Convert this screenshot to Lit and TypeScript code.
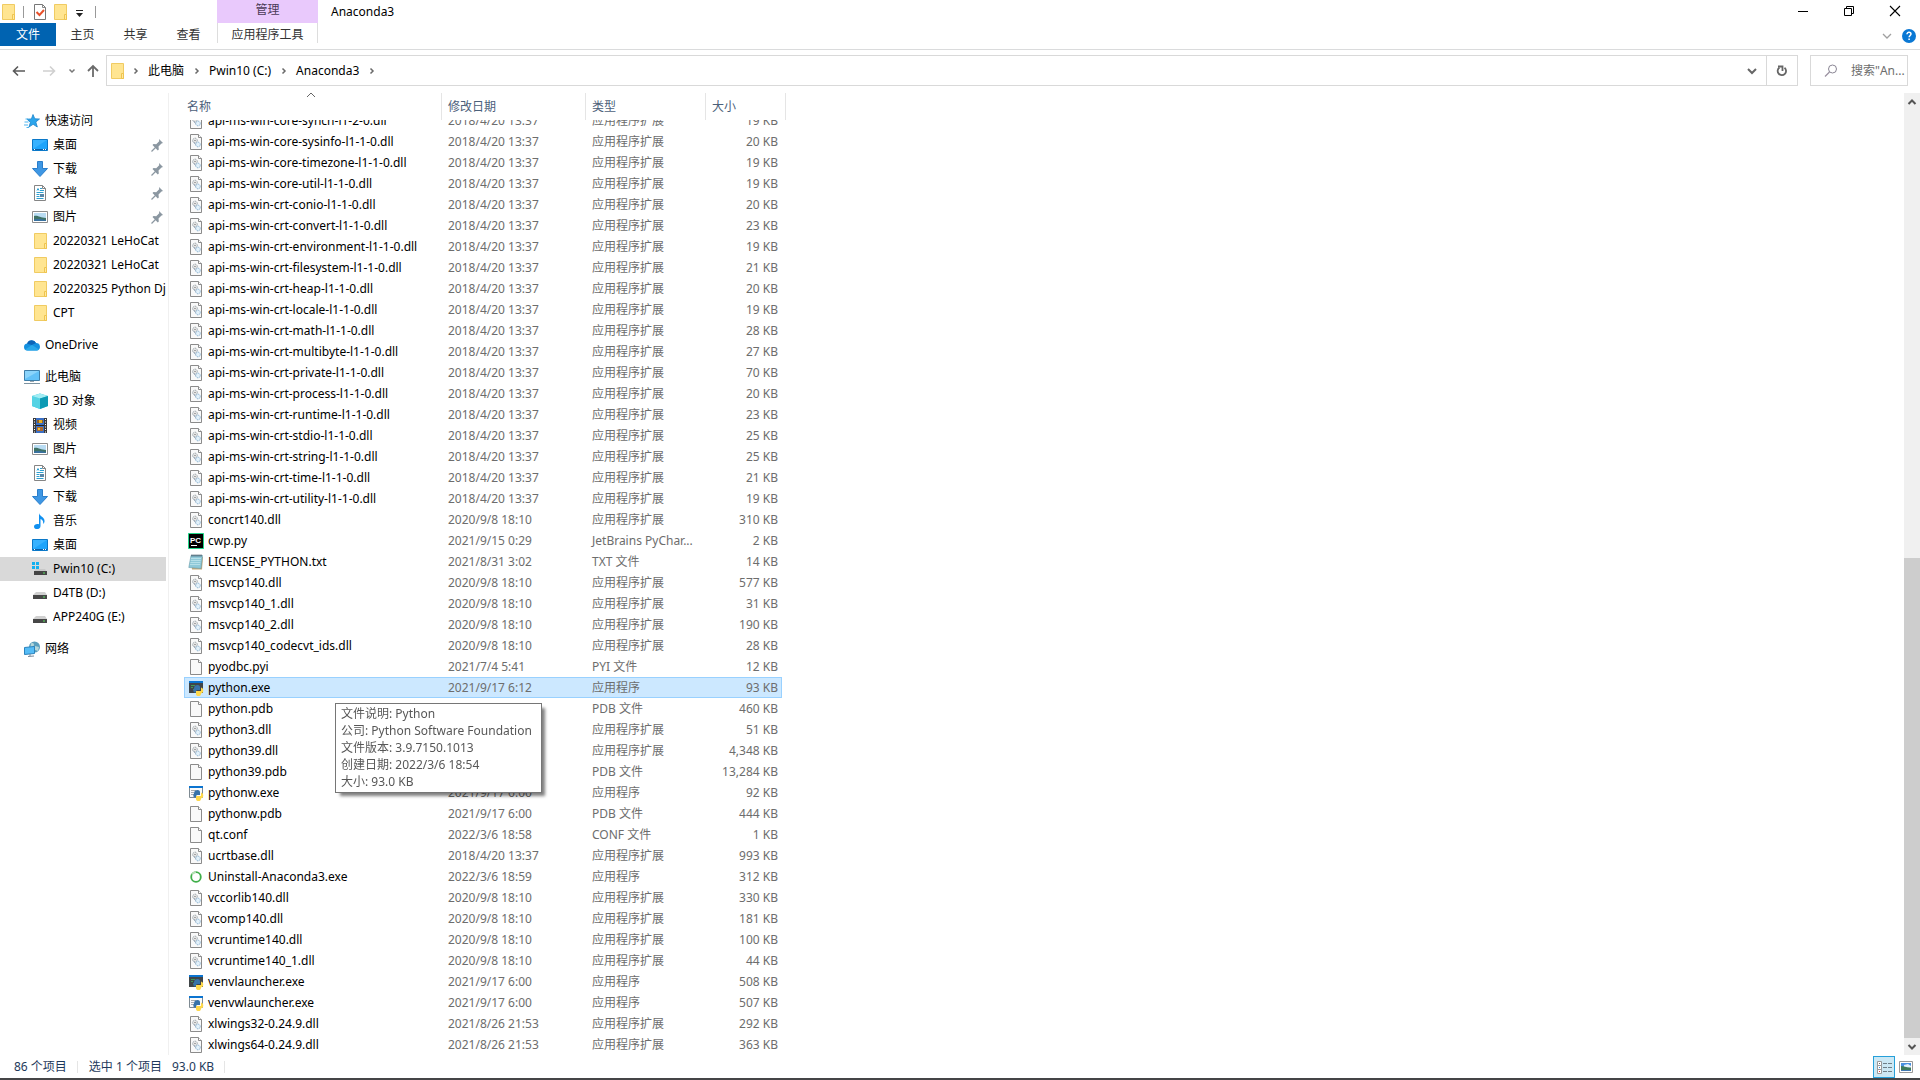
import { LitElement, html, css, svg, nothing } from "lit";
import { customElement } from "lit/decorators.js";
import { classMap } from "lit/directives/class-map.js";

const shape = {
  folder: svg`<path d="M2.5.5h12v15h-12z" fill="#ffe38b" stroke="#f0cb62"/><path d="M3 1h11v14H3z" fill="#ffe591"/><path d="M12.5 10.5h2v5h-2z" fill="#ffe9a0" stroke="#efc44f"/>`,
  check: svg`<path d="M2.500.5h8l3 3v12h-11z" fill="#fff" stroke="#777"/><path d="M10.500.5v3h3" fill="none" stroke="#888"/><path d="M4.500 8l3 3L12 6" fill="none" stroke="#e8502a" stroke-width="2"/>`,
  star: svg`<path d="M9 1.500l1.800 4.300 4.700.2-3.700 3 1.500 5-4.200-2.700L5 14l1.400-4.700L3 6.200l4.400-.3z" fill="#2ba5ec" stroke="#1c84cc" stroke-width=".8"/><path d="M1.500 6H4M.5 9h4M0 12h4M2.500 14.500H5" stroke="#4db4ef"/>`,
  desktop: svg`<path d="M.5 2.500h15v11H.5z" fill="#1ea4fb" stroke="#0b78c8"/><path d="M1 3h14L1 12z" fill="#38b2ff"/><path d="M1 12.500h14" stroke="#0a5fa8"/><path d="M2 12.500h1M11 12.500h1M13 12.500h1" stroke="#fff"/>`,
  download: svg`<path d="M5.500.5h5v7h5L8 15.500.500 7.500h5z" fill="#3e97e4" stroke="#2a7ecb"/>`,
  doc: svg`<path d="M2.500.5h8l3 3v12h-11z" fill="#fff" stroke="#858585"/><path d="M10.500.5v3h3" fill="none" stroke="#858585"/><path d="M5 5.500l1-2 1 2M8 3.500h2M8 5.500h4M4.500 7.500h7M4.500 9.500h3M4.500 11.500h3M4.500 13.500h7" fill="none" stroke="#2e9fd0"/><path d="M8 9h4v3H8z" fill="#5b88a8"/>`,
  picture: svg`<path d="M.5 2.500h15v11H.5z" fill="#fff" stroke="#8d8d8d"/><path d="M2 4h12v8H2z" fill="#b9dcf3"/><path d="M2 7c4-1 6 2 12 2v3H2z" fill="#3f7266"/><path d="M2 10.500c5-1 8 0 12 .5v1H2z" fill="#39719f"/>`,
  thumbs: svg`<path d="M1.500 2.500h13v11h-13z" fill="#fff" stroke="#999"/><path d="M3 4h10v7H3z" fill="#4a90e0"/><path d="M6 6l4-1 3 2v2H6z" fill="#e6f1fb"/><path d="M3 7c3 0 6 2 10 1.500V12H3z" fill="#3f7a5a"/><path d="M3 11h10v1H3z" fill="#4379b0"/>`,
  cloud: svg`<path d="M3.500 13.500a3.500 3.500 0 0 1 0-7 4.700 4.700 0 0 1 8.500-.5 3.800 3.800 0 0 1 1 7.500z" fill="#1490df"/><path d="M3 6.800a4.800 4.800 0 0 1 9-.8l-4.300 2z" fill="#0b64b8"/><path d="M1 12.500l7-4.500 7 4.500a4 4 0 0 1-2 1H3.500a4 4 0 0 1-2.500-1z" fill="#28a8ea"/>`,
  pc: svg`<path d="M.5 1.500h15v10H.5z" fill="#62c1f7" stroke="#3f7ea8"/><path d="M1 2h14L1 10z" fill="#8bd4fb"/><path d="M6 12.500h4" stroke="#9aa6ae"/><path d="M0 14.500h16" stroke="#7d93a1"/>`,
  cube: svg`<path d="M8 .5l8 2.500v10l-8 3-8-3V3z" fill="#30c3d8"/><path d="M0 3l8 2.500V16l-8-3z" fill="#55d3e4"/><path d="M8 .5L16 3 8 5.500 0 3z" fill="#a2edf4"/><path d="M8 5.500L16 3v10l-8 3z" fill="#0c9ab4"/>`,
  video: svg`<path d="M1 1h14v15H1z" fill="#3a3a3a"/><path d="M4 1h8v15H4z" fill="#3b6fc4"/><path d="M5 3h6v3H5z" fill="#8d6028"/><path d="M7 3h3v3H7z" fill="#e8b020"/><path d="M5 10h6v4H5z" fill="#ad6a2e"/><path d="M6 11h2v2H6z" fill="#f0c030"/><path d="M4 8.500h8" stroke="#222"/><path d="M2.500 2v14M13.500 2v14" stroke="#fff" stroke-dasharray="1 1.500"/>`,
  music: svg`<path d="M7 0c.5 3.500 6 4 5.500 8.500-.2 1.500-1 2-1.500 2.500.8-3-.8-4.500-2.500-5v7c0 4-6.500 4-6.500.8 0-2.300 2.500-3.300 5-2.500z" fill="#1090f0"/>`,
  windisk: svg`<path d="M0 1h3v3H0zM4 1h3v3H4zM0 5h3v3H0zM4 5h3v3H4z" fill="#12b0f0"/><path d="M4 8h9l2 3H2z" fill="#c9c9c9"/><path d="M2 10h13v4H2z" fill="#454545"/><path d="M11 12h2" stroke="#58e060"/>`,
  disk: svg`<path d="M4 7h9l2 3H1z" fill="#d0d0d0"/><path d="M1 10h14v4H1z" fill="#474747"/><path d="M11 12h2" stroke="#58e060"/>`,
  network: svg`<circle cx="10.500" cy="6" r="5.500" fill="#5b9fbd"/><path d="M7 2.500c2-1 3 0 3 1.500S8 6 6.500 6zM11 5l4 1-1 4-3-1z" fill="#b5d7da"/><path d="M.5 6.500l10-1v7l-10 1z" fill="#55bcf6" stroke="#2b83bd"/><path d="M4 15.500l6-.5M6 13v2" stroke="#789"/>`,
  dll: svg`<path d="M2.500.5h8l3 3v12h-11z" fill="#f9f9f9" stroke="#8b8b8b"/><path d="M10.500.5v3h3" fill="#fff" stroke="#8b8b8b"/><circle cx="7" cy="6.500" r="2.300" fill="#eee" stroke="#8a959c" stroke-dasharray="1 .6"/><circle cx="7" cy="6.500" r=".8" fill="#888"/><circle cx="10" cy="10.500" r="2.300" fill="#e3f1fa" stroke="#82add0" stroke-dasharray="1 .6"/><path d="M5.500 8.500l2.500 2" stroke="#9ab"/>`,
  file: svg`<path d="M2.500.5h8l3 3v12h-11z" fill="#f9f9f9" stroke="#8b8b8b"/><path d="M10.500.5v3h3" fill="#fff" stroke="#8b8b8b"/>`,
  txt: svg`<path d="M3 3h12l-1 12.500H4z" fill="#c5a977"/><path d="M3 1.500h11.500L13 14.500.8 13.500z" fill="#8fc9d8" stroke="#699cab" stroke-width=".6"/><path d="M3 4.500h10M2.700 6.500h10M2.400 8.500h10M2 10.500h10" stroke="#c5e8ef" stroke-width=".7"/><path d="M3.500 1.500H14" stroke="#345" stroke-width="2" stroke-dasharray="1 1"/>`,
  pycharm: svg`<path d="M.5.500h15v15H.5z" fill="#000" stroke="#21d789"/><text x="2" y="9.500" font-family="Liberation Sans, sans-serif" font-size="8" font-weight="700" fill="#fff">PC</text><path d="M3 12.500h6" stroke="#fff"/>`,
  py: svg`<path d="M1 1h14v12H1z" fill="#404548"/><path d="M1 1h14v2H1z" fill="#0b74d0"/><path d="M3 5.500h4M3 7.500h2M5 9.500h2" stroke="#3f9a55"/><path d="M6 8.500C6 6 7.500 5 9.500 5S12 6 12 7.500V10H8.500v2.500H7C5 12.500 5 9.500 6 8.500z" fill="#3873a8"/><path d="M13 7.500c3 .5 3 5.500 0 6 0 2-1 2.500-2.500 2.500S8 15.500 8 14v-3h5z" fill="#ffd94c"/>`,
  pyw: svg`<path d="M1.500 1.500h13v11h-13z" fill="#fafafa" stroke="#7e8a92"/><path d="M1 1h14v2H1z" fill="#0b74d0"/><path d="M3 5.500h5M3 7.500h3M3 9.500h3" stroke="#a8aeb2"/><path d="M6 8.500C6 6 7.500 5 9.500 5S12 6 12 7.500V10H8.500v2.500H7C5 12.500 5 9.500 6 8.500z" fill="#3873a8"/><path d="M13 7.500c3 .5 3 5.500 0 6 0 2-1 2.500-2.500 2.500S8 15.500 8 14v-3h5z" fill="#ffd94c"/>`,
  ring: svg`<circle cx="8" cy="8" r="4.800" fill="none" stroke="#3fae49" stroke-width="1.800"/><path d="M4 5.500A4.800 4.800 0 0 1 8 3.200" fill="none" stroke="#b5e0b5" stroke-width="1.800"/>`,
  pin: svg`<path d="M11 2l4 4-1.500.5-3 3 .3 3-1 1L4.500 8l1-1 2.700.2 3-3z" fill="#8b97a1"/><path d="M8 10l-4.500 4.500" stroke="#8b97a1" stroke-width="1.300"/>`,
  back: svg`<path d="M2.500 8h11.500M7 3.500L2.500 8 7 12.500" fill="none" stroke="#5a5a5a" stroke-width="1.600"/>`,
  forward: svg`<path d="M2 8h11.500M9 3.500l4.500 4.500L9 12.500" fill="none" stroke="#d0d0d0" stroke-width="1.600"/>`,
  up: svg`<path d="M8 14V3M3 8l5-5 5 5" fill="none" stroke="#6b6b6b" stroke-width="1.800"/>`,
  small: svg`<path d="M5.500 6.500L8 9l2.500-2.500" fill="none" stroke="#777" stroke-width="1.500"/>`,
  sep: svg`<path d="M6.500 5.500L9 8l-2.500 2.500" fill="none" stroke="#6a6a6a" stroke-width="1.500"/>`,
  drop: svg`<path d="M4 6l4 4 4-4" fill="none" stroke="#666" stroke-width="2"/>`,
  thin: svg`<path d="M4 6l4 4 4-4" fill="none" stroke="#a0a0a0" stroke-width="1.300"/>`,
  refresh: svg`<path d="M5.500 4.500a4.200 4.200 0 1 0 5 .2" fill="none" stroke="#666" stroke-width="1.800"/><path d="M4 3.500h4.500V8" fill="none" stroke="#666" stroke-width="1.800"/>`,
  search: svg`<circle cx="9.500" cy="6" r="4" fill="none" stroke="#8a8694"/><path d="M6.500 9L2 13.500" stroke="#9a90a0" stroke-width="1.200"/>`,
  min: svg`<path d="M3 8.500h10" stroke="#000"/>`,
  restore: svg`<path d="M3.500 5.500h7v7h-7zM5.500 5V3.500h7v7H11" fill="none" stroke="#000"/>`,
  close: svg`<path d="M3 3l10 10M13 3L3 13" stroke="#000" stroke-width="1.100"/>`,
  help: svg`<circle cx="8" cy="8" r="7" fill="#0a78d4"/><path d="M6 6.300c0-2.800 4-2.500 4-.2C10 7.500 8.100 7.500 8.100 9.300M8.100 10.500V12" fill="none" stroke="#fff" stroke-width="1.500"/>`,
  custom: svg`<path d="M4 6.500h7" stroke="#222"/><path d="M4 9h7l-3.500 4z" fill="#222"/>`,
  caretUp: svg`<path d="M4.500 10L8 6.500l3.500 3.500" fill="none" stroke="#555" stroke-width="2"/>`,
  caretDown: svg`<path d="M4.500 6L8 9.500 11.500 6" fill="none" stroke="#555" stroke-width="2"/>`,
  details: svg`<path d="M1.500 2.500h4v4h-4zM1.500 6.500h4v4h-4zM1.500 10.500h4v4h-4z" fill="#fff" stroke="#999"/><path d="M3 4.500h1" stroke="#666"/><path d="M3 8.500h1" stroke="#38d"/><path d="M3 12.500h1" stroke="#d33"/><path d="M7 4.500h4M12 4.500h4M7 8.500h4M12 8.500h4M7 12.500h4M12 12.500h4" stroke="#6f7f88"/>`,
};
type Icon = keyof typeof shape;
const icon = (name: Icon) =>
  html`<svg class="icon" viewBox="0 0 16 16" width="16" height="16" aria-hidden="true">${shape[name]}</svg>`;

interface Place { label: string; icon: Icon; pinned?: boolean; selected?: boolean }
const places: { head: Place; items: Place[] }[] = [
  {
    head: { label: "快速访问", icon: "star" },
    items: [
      { label: "桌面", icon: "desktop", pinned: true },
      { label: "下载", icon: "download", pinned: true },
      { label: "文档", icon: "doc", pinned: true },
      { label: "图片", icon: "picture", pinned: true },
      { label: "20220321 LeHoCat", icon: "folder" },
      { label: "20220321 LeHoCat", icon: "folder" },
      { label: "20220325 Python Dj", icon: "folder" },
      { label: "CPT", icon: "folder" },
    ],
  },
  { head: { label: "OneDrive", icon: "cloud" }, items: [] },
  {
    head: { label: "此电脑", icon: "pc" },
    items: [
      { label: "3D 对象", icon: "cube" },
      { label: "视频", icon: "video" },
      { label: "图片", icon: "picture" },
      { label: "文档", icon: "doc" },
      { label: "下载", icon: "download" },
      { label: "音乐", icon: "music" },
      { label: "桌面", icon: "desktop" },
      { label: "Pwin10 (C:)", icon: "windisk", selected: true },
      { label: "D4TB (D:)", icon: "disk" },
      { label: "APP240G (E:)", icon: "disk" },
    ],
  },
  { head: { label: "网络", icon: "network" }, items: [] },
];

type Row = [name: string, date: string, size: string, type?: string, icon?: Icon];
const EXT = "应用程序扩展";
const APP = "应用程序";
const sdk = "2018/4/20 13:37";
const vc = "2020/9/8 18:10";
const files: Row[] = [
  ["api-ms-win-core-synch-l1-2-0.dll", sdk, "19"],
  ["api-ms-win-core-sysinfo-l1-1-0.dll", sdk, "20"],
  ["api-ms-win-core-timezone-l1-1-0.dll", sdk, "19"],
  ["api-ms-win-core-util-l1-1-0.dll", sdk, "19"],
  ["api-ms-win-crt-conio-l1-1-0.dll", sdk, "20"],
  ["api-ms-win-crt-convert-l1-1-0.dll", sdk, "23"],
  ["api-ms-win-crt-environment-l1-1-0.dll", sdk, "19"],
  ["api-ms-win-crt-filesystem-l1-1-0.dll", sdk, "21"],
  ["api-ms-win-crt-heap-l1-1-0.dll", sdk, "20"],
  ["api-ms-win-crt-locale-l1-1-0.dll", sdk, "19"],
  ["api-ms-win-crt-math-l1-1-0.dll", sdk, "28"],
  ["api-ms-win-crt-multibyte-l1-1-0.dll", sdk, "27"],
  ["api-ms-win-crt-private-l1-1-0.dll", sdk, "70"],
  ["api-ms-win-crt-process-l1-1-0.dll", sdk, "20"],
  ["api-ms-win-crt-runtime-l1-1-0.dll", sdk, "23"],
  ["api-ms-win-crt-stdio-l1-1-0.dll", sdk, "25"],
  ["api-ms-win-crt-string-l1-1-0.dll", sdk, "25"],
  ["api-ms-win-crt-time-l1-1-0.dll", sdk, "21"],
  ["api-ms-win-crt-utility-l1-1-0.dll", sdk, "19"],
  ["concrt140.dll", vc, "310"],
  ["cwp.py", "2021/9/15 0:29", "2", "JetBrains PyChar...", "pycharm"],
  ["LICENSE_PYTHON.txt", "2021/8/31 3:02", "14", "TXT 文件", "txt"],
  ["msvcp140.dll", vc, "577"],
  ["msvcp140_1.dll", vc, "31"],
  ["msvcp140_2.dll", vc, "190"],
  ["msvcp140_codecvt_ids.dll", vc, "28"],
  ["pyodbc.pyi", "2021/7/4 5:41", "12", "PYI 文件", "file"],
  ["python.exe", "2021/9/17 6:12", "93", APP, "py"],
  ["python.pdb", "2021/9/17 6:12", "460", "PDB 文件", "file"],
  ["python3.dll", "2021/9/17 6:00", "51"],
  ["python39.dll", "2021/9/17 6:00", "4,348"],
  ["python39.pdb", "2021/9/17 6:00", "13,284", "PDB 文件", "file"],
  ["pythonw.exe", "2021/9/17 6:00", "92", APP, "pyw"],
  ["pythonw.pdb", "2021/9/17 6:00", "444", "PDB 文件", "file"],
  ["qt.conf", "2022/3/6 18:58", "1", "CONF 文件", "file"],
  ["ucrtbase.dll", sdk, "993"],
  ["Uninstall-Anaconda3.exe", "2022/3/6 18:59", "312", APP, "ring"],
  ["vccorlib140.dll", vc, "330"],
  ["vcomp140.dll", vc, "181"],
  ["vcruntime140.dll", vc, "100"],
  ["vcruntime140_1.dll", vc, "44"],
  ["venvlauncher.exe", "2021/9/17 6:00", "508", APP, "py"],
  ["venvwlauncher.exe", "2021/9/17 6:00", "507", APP, "pyw"],
  ["xlwings32-0.24.9.dll", "2021/8/26 21:53", "292"],
  ["xlwings64-0.24.9.dll", "2021/8/26 21:53", "363"],
];
const selectedName = "python.exe";
const tip = [
  "文件说明: Python",
  "公司: Python Software Foundation",
  "文件版本: 3.9.7150.1013",
  "创建日期: 2022/3/6 18:54",
  "大小: 93.0 KB",
];

@customElement("app-root")
export class AppRoot extends LitElement {
  static styles = css`
    :host {
      display: flex;
      flex-direction: column;
      height: 100vh;
      overflow: hidden;
      background: #fff;
      color: #000;
      font: 12px/16px "Noto Sans", "Noto Sans CJK SC", sans-serif;
    }
    * { box-sizing: border-box; }
    button, input { font: inherit; color: inherit; border: 0; margin: 0; padding: 0; background: none; }
    a { color: inherit; text-decoration: none; }
    .icon { flex: none; display: block; }
    .top { display: grid; grid-template-columns: 217px 101px 1fr auto; grid-template-rows: 23px 26px; border-bottom: 1px solid #dadbdc; flex: none; height: 50px; }
    .quick { display: flex; align-items: center; gap: 4px; }
    .quick button { display: flex; }
    .quick .bar { width: 1px; height: 12px; background: #999; margin: 0 4px 0 3px; }
    .context { background: #e9c9fc; color: #4b3a57; text-align: center; line-height: 20px; }
    .title { padding-left: 13px; line-height: 24px; margin: 0; font-size: 12px; font-weight: 400; }
    .window { display: flex; padding-right: 2px; }
    .window button { width: 46px; height: 21px; display: flex; align-items: center; justify-content: center; }
    .tabs { display: flex; height: 23px; color: #333; }
    .tabs button { width: 53px; }
    .tabs .main { width: 56px; background: #0063b1; color: #fff; }
    .tool { height: 20px; line-height: 24px; color: #333; border-left: 1px solid #ddd; border-right: 1px solid #ddd; }
    .help { grid-column: 4; display: flex; justify-content: flex-end; align-items: center; gap: 6px; height: 26px; padding-right: 3px; }
    .help button { display: flex; }
    .nav { display: flex; align-items: center; flex: none; height: 43px; padding: 0 12px 2px 11px; }
    .arrows { display: flex; width: 95px; }
    .arrows button { display: flex; }
    .arrows .b1 { margin-right: 14px; }
    .arrows .b2 { margin-right: 7px; }
    .arrows .b3 { margin-right: 5px; }
    .address { display: flex; align-items: center; flex: 1; height: 31px; border: 1px solid #d9d9d9; padding-left: 2px; margin-right: 12px; }
    .crumbs { display: flex; align-items: center; flex: 1; }
    .crumbs .icon { margin-right: 4px; }
    .crumbs .icon:first-child { margin-right: 3px; }
    .crumbs button + .icon { margin-left: 5px; }
    .address .end { width: 29px; height: 29px; display: flex; align-items: center; justify-content: center; }
    .address .refresh { width: 31px; border-left: 1px solid #d9d9d9; }
    .search { display: flex; align-items: center; width: 98px; height: 31px; border: 1px solid #d9d9d9; padding-left: 12px; gap: 12px; }
    .search input { flex: 1; min-width: 0; color: #6d6d6d; outline: 0; }
    .search input::placeholder { color: #6d6d6d; opacity: 1; }
    .body { display: flex; flex: 1; min-height: 0; }
    .side { width: 169px; flex: none; border-right: 1px solid #f0f0f0; padding: 16px 2px 0 0; overflow: hidden; }
    .group { margin: 0 0 8px; padding: 0; list-style: none; }
    .place { display: flex; align-items: center; gap: 5px; height: 24px; padding-left: 32px; white-space: nowrap; overflow: hidden; }
    .place.head { padding-left: 24px; }
    .place.selected { background: #d9d9d9; }
    .place span { flex: 1; min-width: 0; overflow: hidden; }
    .place .pin { margin-right: 2px; display: flex; }
    .files { flex: 1; min-width: 0; overflow: hidden; padding-left: 15px; }
    table { border-collapse: separate; border-spacing: 0; table-layout: fixed; width: 602px; }
    .c1 { width: 258px; } .c2 { width: 144px; } .c3 { width: 120px; } .c4 { width: 76px; } .c5 { width: 4px; }
    thead th { position: sticky; top: 0; z-index: 1; height: 27px; padding: 0 0 0 6px; background: #fff; border-right: 1px solid #e5e5e5; text-align: left; font-weight: 400; color: #4c607a; vertical-align: top; line-height: 27px; }
    thead th:first-child { padding-left: 3px; }
    .sort { position: absolute; left: 119px; top: -6px; }
    td { height: 21px; padding: 0 0 0 6px; color: #6d6d6d; white-space: nowrap; }
    td.name { padding-left: 4px; color: #000; position: relative; }
    td.size { text-align: right; padding: 0 4px 0 0; }
    .file { display: flex; align-items: center; gap: 4px; }
    .selected td { background: #cce8ff; border: 0 solid #99d1ff; border-width: 1px 0; }
    .selected td.name { border-left-width: 1px; padding-left: 3px; }
    .selected td.size { border-right-width: 1px; padding-right: 3px; }
    .selected td.blank { background: none; border: 0; }
    .tip { position: absolute; z-index: 2; left: 150px; top: 25px; width: 207px; padding: 1px 5px 2px; border: 1px solid #767676; background: #fff; color: #575757; line-height: 17px; box-shadow: 4px 4px 3px -1px rgba(0, 0, 0, .5); }
    .scroll { width: 16px; flex: none; display: flex; flex-direction: column; background: #f0f0f0; }
    .scroll button { height: 17px; display: flex; align-items: center; }
    .before { flex: 448; }
    .thumb { flex: 481; background: #cdcdcd; }
    .status { display: flex; align-items: center; flex: none; height: 23px; padding: 1px 6px 0 14px; color: #1e395b; }
    .status .bar { width: 1px; height: 12px; background: #e5e5e5; margin: 0 11px 0 10px; }
    .status .gap { margin-left: 10px; }
    .views { display: flex; margin-left: auto; align-items: center; gap: 3px; height: 100%; }
    .views button { display: flex; align-items: center; justify-content: center; }
    .views .on { width: 22px; height: 22px; background: #cce8f4; border: 1px solid #26a0da; }
    .edge { flex: none; height: 2px; background: #454547; }
  `;

  firstUpdated() {
    const list = this.renderRoot.querySelector(".files")!;
    list.scrollTop = list.scrollHeight;
  }

  private place(p: Place, head = false) {
    return html`<li>
      <a href="#" class=${classMap({ place: true, head, selected: !!p.selected })}>
        ${icon(p.icon)}<span>${p.label}</span>
        ${p.pinned ? html`<i class="pin">${icon("pin")}</i>` : nothing}
      </a>
    </li>`;
  }

  private row([name, date, size, type = EXT, kind = "dll"]: Row) {
    const selected = name === selectedName;
    return html`<tr class=${classMap({ selected })}>
      <td class="name">
        <div class="file">${icon(kind)}<span>${name}</span></div>
        ${selected ? html`<div class="tip" role="tooltip">${tip.map((t) => html`<div>${t}</div>`)}</div>` : nothing}
      </td>
      <td>${date}</td>
      <td>${type}</td>
      <td class="size">${size} KB</td>
      <td class="blank"></td>
    </tr>`;
  }

  render() {
    return html`
      <header class="top">
        <div class="quick">
          ${icon("folder")}<span class="bar"></span>
          <button aria-label="属性">${icon("check")}</button>
          <button aria-label="新建文件夹">${icon("folder")}</button>
          <button aria-label="自定义快速访问工具栏">${icon("custom")}</button><span class="bar"></span>
        </div>
        <div class="context">管理</div>
        <h1 class="title">Anaconda3</h1>
        <div class="window">
          <button aria-label="最小化">${icon("min")}</button>
          <button aria-label="还原">${icon("restore")}</button>
          <button aria-label="关闭">${icon("close")}</button>
        </div>
        <div class="tabs">
          <button class="main">文件</button><button>主页</button><button>共享</button><button>查看</button>
        </div>
        <button class="tool">应用程序工具</button>
        <div class="help">
          <button aria-label="展开功能区">${icon("thin")}</button>
          <button aria-label="帮助">${icon("help")}</button>
        </div>
      </header>
      <div class="nav">
        <div class="arrows">
          <button class="b1" aria-label="后退">${icon("back")}</button>
          <button class="b2" aria-label="前进">${icon("forward")}</button>
          <button class="b3" aria-label="最近浏览的位置">${icon("small")}</button>
          <button aria-label="上移">${icon("up")}</button>
        </div>
        <div class="address">
          <div class="crumbs">
            ${icon("folder")}${icon("sep")}
            ${["此电脑", "Pwin10 (C:)", "Anaconda3"].map((c) => html`<button>${c}</button>${icon("sep")}`)}
          </div>
          <button class="end" aria-label="以前的位置">${icon("drop")}</button>
          <button class="end refresh" aria-label="刷新">${icon("refresh")}</button>
        </div>
        <div class="search">${icon("search")}<input type="text" aria-label="搜索" placeholder='搜索"An...' /></div>
      </div>
      <div class="body">
        <nav class="side">
          ${places.map((g) => html`<ul class="group">${this.place(g.head, true)}${g.items.map((p) => this.place(p))}</ul>`)}
        </nav>
        <main class="files">
          <table>
            <colgroup><col class="c1" /><col class="c2" /><col class="c3" /><col class="c4" /><col class="c5" /></colgroup>
            <thead>
              <tr>
                <th>名称<span class="sort"><svg class="icon" viewBox="0 0 16 16" width="16" height="16" aria-hidden="true"><path d="M4 10l4-4 4 4" fill="none" stroke="#666"/></svg></span></th>
                <th>修改日期</th><th>类型</th><th colspan="2">大小</th>
              </tr>
            </thead>
            <tbody>${files.map((f) => this.row(f))}</tbody>
          </table>
        </main>
        <div class="scroll">
          <button aria-label="向上滚动">${icon("caretUp")}</button>
          <div class="before"></div>
          <div class="thumb"></div>
          <button aria-label="向下滚动">${icon("caretDown")}</button>
        </div>
      </div>
      <footer class="status">
        <span>86 个项目</span><span class="bar"></span>
        <span>选中 1 个项目</span><span class="gap">93.0 KB</span><span class="bar"></span>
        <div class="views">
          <button class="on" aria-label="详细信息">${icon("details")}</button>
          <button aria-label="大缩略图">${icon("thumbs")}</button>
        </div>
      </footer>
      <div class="edge"></div>
    `;
  }
}
